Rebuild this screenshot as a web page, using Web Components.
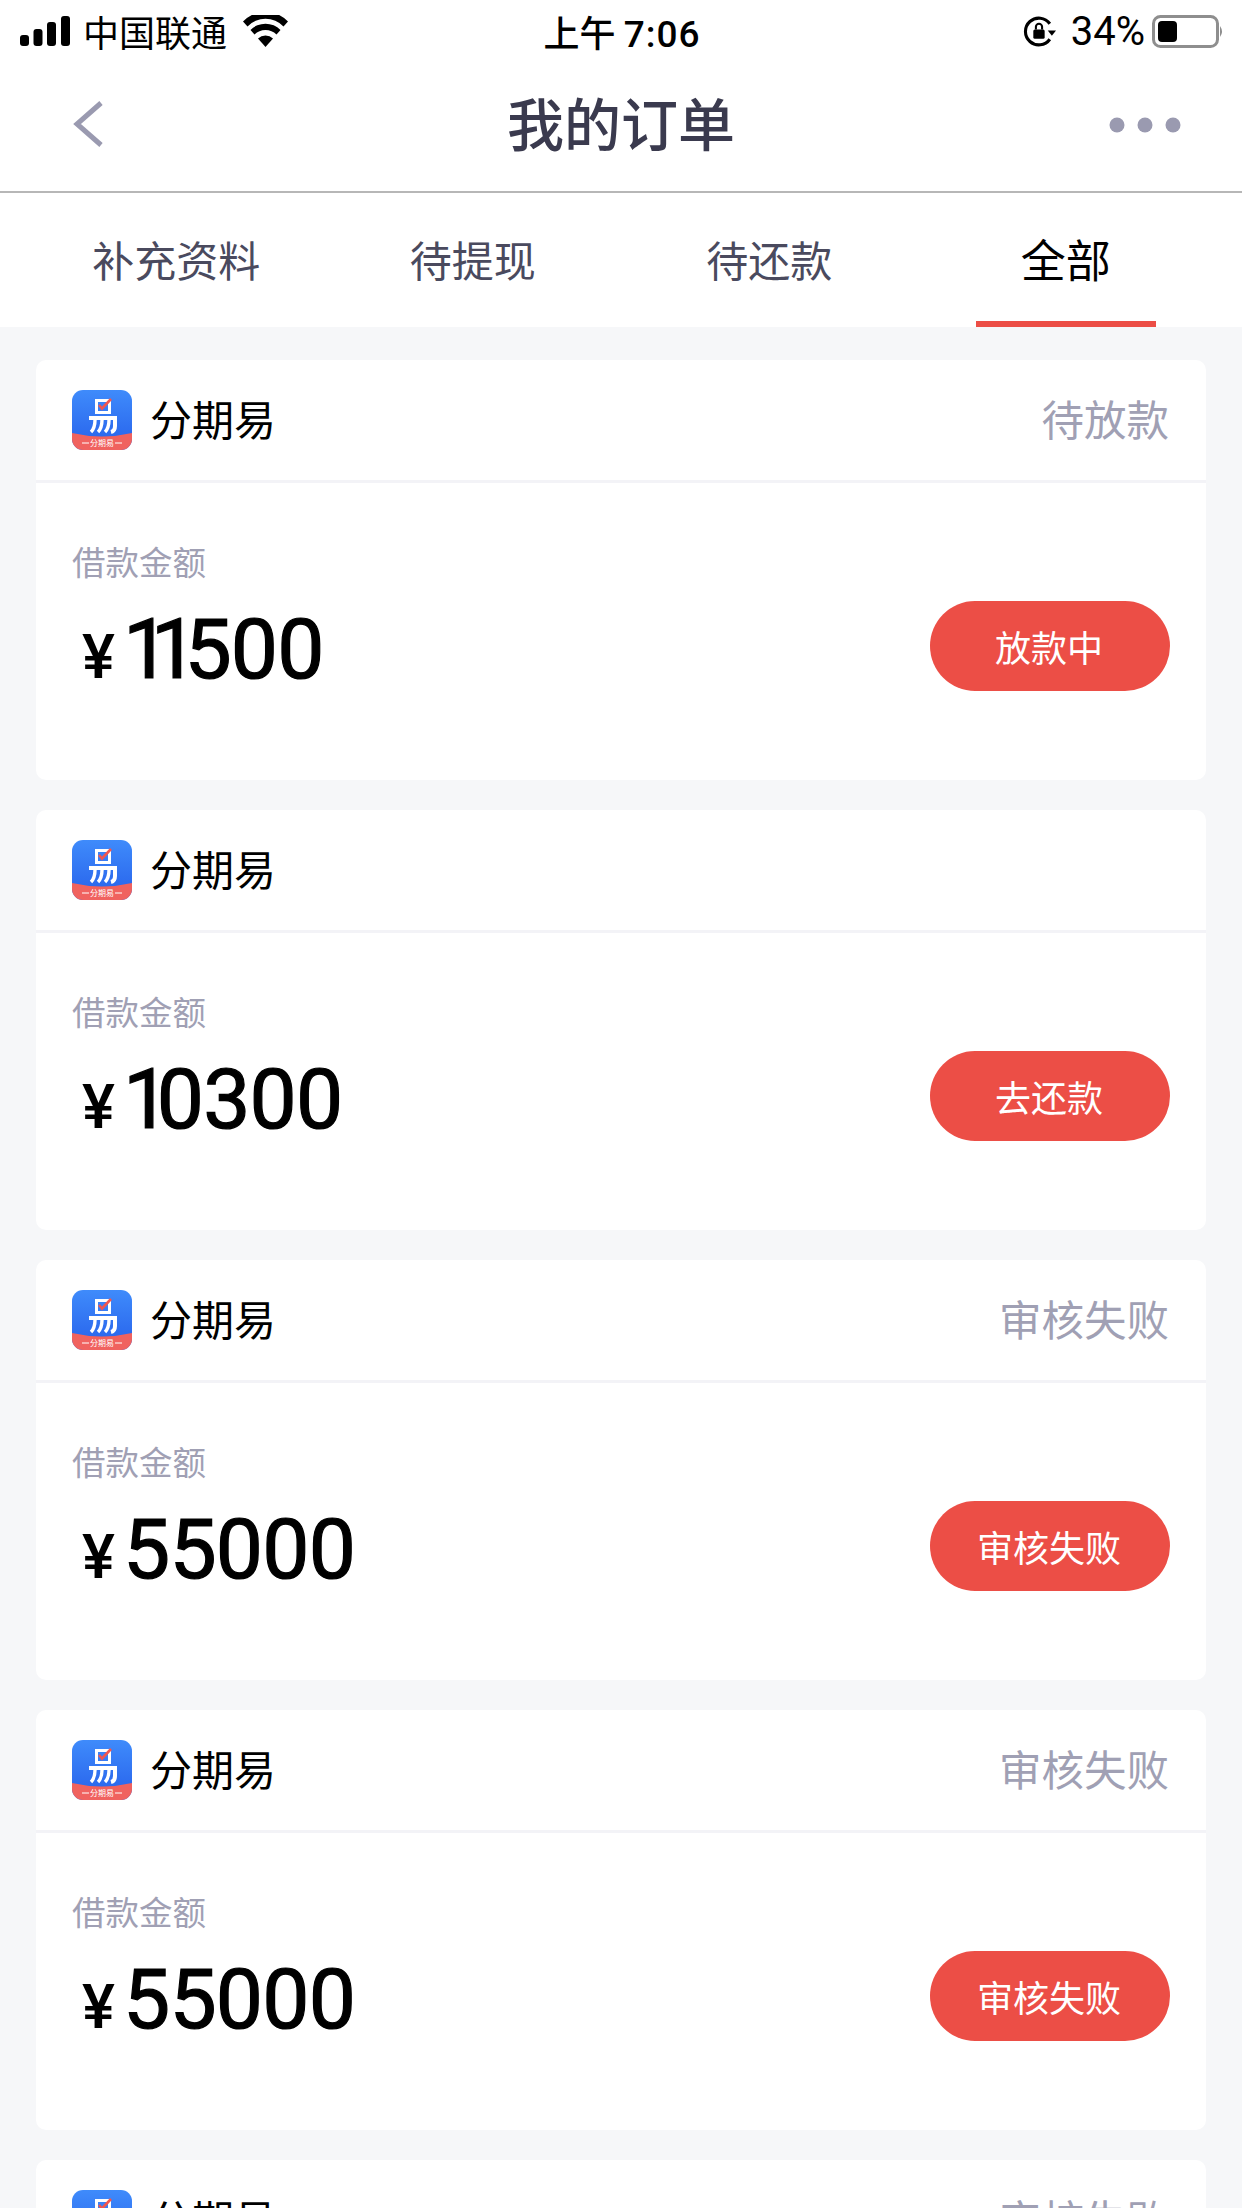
<!DOCTYPE html>
<html lang="zh-CN">
<head>
<meta charset="utf-8">
<title>我的订单</title>
<style>
    html, body {
        margin: 0;
        height: 2208px;
        overflow: hidden;
        background: #f6f7f9;
        font-family: "Noto Sans CJK SC", "Liberation Sans", sans-serif;
    }
    .list {
        display: flex;
        flex-direction: column;
        gap: 30px;
        padding: 33px 36px 0;
    }
</style>
</head>
<body>
<status-bar></status-bar>
<nav-bar>我的订单</nav-bar>
<tab-bar tabs="补充资料,待提现,待还款,全部" active="3"></tab-bar>
<div class="list">
    <order-card status="待放款" amount="11500" action="放款中">分期易</order-card>
    <order-card status="" amount="10300" action="去还款">分期易</order-card>
    <order-card status="审核失败" amount="55000" action="审核失败">分期易</order-card>
    <order-card status="审核失败" amount="55000" action="审核失败">分期易</order-card>
    <order-card status="审核失败" amount="55000" action="审核失败">分期易</order-card>
</div>
<script>
class StatusBar extends HTMLElement {
    constructor() {
        super();
        this.attachShadow({ mode: 'open' });
    }

    connectedCallback() {
        this.shadowRoot.innerHTML = `
        <style>
            :host {
                display: grid;
                grid-template-columns: 1fr auto 1fr;
                align-items: center;
                box-sizing: border-box;
                height: 62px;
                padding: 0 18px 2px 20px;
                background: #fff;
                color: #000;
                font-size: 36px;
                font-family: "Noto Sans CJK SC", sans-serif;
            }
            .left, .right { display: flex; align-items: center; }
            .right { justify-content: flex-end; }
            .carrier { margin: 0 15px 0 13px; line-height: 60px; }
            .time { font-weight: 500; font-size: 36px; line-height: 60px; }
            .time b { font: 500 37px Roboto, sans-serif; letter-spacing: 1px; }
            .pct { font: 400 40px/60px Roboto, sans-serif; margin: 2px 7px 0 15px; }
            svg { display: block; }
        </style>
        <div class="left">
            <svg width="50" height="30" viewBox="0 0 50 30">
                <rect x="0" y="19" width="9" height="11" rx="3"/>
                <rect x="13.5" y="13" width="9" height="17" rx="3"/>
                <rect x="27" y="6" width="9" height="24" rx="3"/>
                <rect x="41" y="0" width="9" height="30" rx="3"/>
            </svg>
            <span class="carrier">中国联通</span>
            <svg width="47" height="32" viewBox="0 0 47 32">
                <path d="M23.5 32 L16 23.5 A11 11 0 0 1 31 23.5 Z"/>
                <path d="M12.5 19.5 L8.5 15 A21 21 0 0 1 38.5 15 L34.5 19.5 A15.5 15.5 0 0 0 12.5 19.5 Z"/>
                <path d="M5.5 11.5 L1 6.5 A31 31 0 0 1 46 6.5 L41.5 11.5 A25 25 0 0 0 5.5 11.5 Z"/>
            </svg>
        </div>
        <div class="time">上午 <b>7:06</b></div>
        <div class="right">
            <svg width="33" height="33" viewBox="0 0 32 32">
                <path d="M26 8.5 A13 13 0 1 0 26 23.5" fill="none" stroke="#000" stroke-width="3"/>
                <path d="M24 15 L32 15 L28 20 Z"/>
                <rect x="10" y="14" width="11" height="9" rx="1.5"/>
                <path d="M12.5 14 V11.5 A3 3 0 0 1 18.5 11.5 V14" fill="none" stroke="#000" stroke-width="2"/>
            </svg>
            <span class="pct">34%</span>
            <svg width="72" height="33" viewBox="0 0 72 33">
                <rect x="1.5" y="1.5" width="64" height="30" rx="7" fill="none" stroke="#8e8e8e" stroke-width="3"/>
                <rect x="6" y="6" width="19" height="21" rx="4"/>
                <path d="M68 11 Q72 16.5 68 22 Z" fill="#8e8e8e"/>
            </svg>
        </div>
        `;
    }
}

class NavBar extends HTMLElement {
    constructor() {
        super();
        this.attachShadow({ mode: 'open' });
    }

    connectedCallback() {
        this.shadowRoot.innerHTML = `
        <style>
            :host {
                display: grid;
                grid-template-columns: 1fr auto 1fr;
                align-items: center;
                box-sizing: border-box;
                height: 131px;
                padding: 0 61px 6px;
                background: #fff;
                border-bottom: 2px solid #b7b7b7;
            }
            .title {
                margin-bottom: 6px;
                font-size: 57px;
                font-weight: 500;
                color: #3a3a4e;
            }
            svg { display: block; }
            .back { margin-left: 11px; }
            .dots { justify-self: end; margin-top: 2px; }
        </style>
        <svg class="back" width="32" height="46" viewBox="0 0 32 46">
            <path d="M29 2 L5 23 L29 44" fill="none" stroke="#9a9ab0" stroke-width="5"/>
        </svg>
        <div class="title"><slot></slot></div>
        <svg class="dots" width="72" height="16" viewBox="0 0 72 16" fill="#9a9ab0">
            <circle cx="8" cy="8" r="7.5"/><circle cx="36" cy="8" r="7.5"/><circle cx="64" cy="8" r="7.5"/>
        </svg>
        `;
    }
}

class TabBar extends HTMLElement {
    constructor() {
        super();
        this.attachShadow({ mode: 'open' });
    }

    connectedCallback() {
        const tabs = (this.getAttribute('tabs') || '').split(',');
        const active = Number(this.getAttribute('active'));
        this.shadowRoot.innerHTML = `
        <style>
            :host {
                display: flex;
                height: 134px;
                padding: 0 28px;
                background: #fff;
            }
            .tab {
                position: relative;
                flex: 1;
                display: flex;
                align-items: center;
                justify-content: center;
                padding-bottom: 4px;
                font-size: 42px;
                color: #4a4a5e;
            }
            .tab.on { color: #000; font-size: 45px; }
            .tab.on::after {
                content: '';
                position: absolute;
                left: 58px;
                right: 58px;
                bottom: 0;
                height: 6px;
                background: #ec4e46;
            }
        </style>
        ${tabs.map((t, i) => `<div class="tab${i === active ? ' on' : ''}">${t}</div>`).join('')}
        `;
    }
}

class AppLogo extends HTMLElement {
    constructor() {
        super();
        this.attachShadow({ mode: 'open' });
    }

    connectedCallback() {
        this.shadowRoot.innerHTML = `
        <style>
            :host { display: block; width: 60px; height: 60px; }
            svg { display: block; }
            text { font-family: "Noto Sans CJK SC", sans-serif; }
        </style>
        <svg width="60" height="60" viewBox="0 0 60 60">
            <defs>
                <linearGradient id="g" x1="0" y1="0" x2="0" y2="1">
                    <stop offset="0" stop-color="#3f8bfb"/>
                    <stop offset="1" stop-color="#2660ea"/>
                </linearGradient>
                <clipPath id="c"><rect width="60" height="60" rx="11"/></clipPath>
            </defs>
            <g clip-path="url(#c)">
                <rect width="60" height="60" fill="url(#g)"/>
                <path d="M0 43 Q30 50 60 43 V60 H0 Z" fill="#f0625f"/>
            </g>
            <rect x="24.5" y="10.5" width="13" height="12" fill="none" stroke="#fff" stroke-width="3"/>
            <path d="M27 15 L30 18.5 L39 9" fill="none" stroke="#f0564f" stroke-width="2.6"/>
            <path d="M17 28 H43 V36 Q43 41 39 42" fill="none" stroke="#fff" stroke-width="4"/>
            <path d="M23 30 Q23 38 19 42 M30 30 Q30 38 26 42 M37 30 Q37 38 33 42" fill="none" stroke="#fff" stroke-width="3.4"/>
            <path d="M10 53 H17 M43 53 H50" stroke="#fff" stroke-width="1"/>
            <text x="30" y="56" font-size="8" fill="#fff" text-anchor="middle">分期易</text>
        </svg>
        `;
    }
}

class OrderCard extends HTMLElement {
    constructor() {
        super();
        this.attachShadow({ mode: 'open' });
    }

    connectedCallback() {
        const status = this.getAttribute('status') || '';
        const amount = this.getAttribute('amount') || '0';
        const action = this.getAttribute('action') || '';
        // the reference digits have a narrow 1, Roboto's is tabular
        const digits = [...amount].map((d, i) => {
            if (d !== '1') return d;
            return `<span class="one${amount[i + 1] === '1' ? ' pair' : ''}">1</span>`;
        }).join('');
        this.shadowRoot.innerHTML = `
        <style>
            :host {
                display: block;
                height: 420px;
                background: #fff;
                border-radius: 10px;
                overflow: hidden;
            }
            .head {
                display: flex;
                align-items: center;
                box-sizing: border-box;
                height: 123px;
                padding: 0 37px 0 36px;
                border-bottom: 3px solid #f3f3f7;
            }
            .brand { flex: 1; margin: 0 0 6px 18px; font-size: 42px; color: #000; }
            .status { margin-bottom: 6px; font-size: 42.5px; color: #a0a0b4; }
            .body {
                display: flex;
                align-items: flex-start;
                justify-content: space-between;
                padding: 54px 36px 0 36px;
            }
            .label { font-size: 33.5px; line-height: 48px; color: #a0a0b4; }
            .amount {
                display: flex;
                align-items: baseline;
                margin-top: 17px;
                padding-left: 10px;
                color: #000;
            }
            .yen { font: 500 62px Roboto, sans-serif; width: 41px; }
            .num {
                font: 400 84px/96px Roboto, sans-serif;
                letter-spacing: -0.8px;
                -webkit-text-stroke: 1.2px #000;
            }
            .one { letter-spacing: -13.5px; }
            .one.pair { letter-spacing: -19.5px; }
            .btn {
                display: flex;
                align-items: center;
                justify-content: center;
                box-sizing: border-box;
                width: 240px;
                height: 90px;
                margin-top: 64px;
                padding-right: 2px;
                border-radius: 45px;
                background: #ec4e46;
                color: #fff;
                font-size: 36px;
            }
        </style>
        <div class="head">
            <app-logo></app-logo>
            <div class="brand"><slot></slot></div>
            <div class="status">${status}</div>
        </div>
        <div class="body">
            <div>
                <div class="label">借款金额</div>
                <div class="amount"><span class="yen">¥</span><span class="num">${digits}</span></div>
            </div>
            <div class="btn">${action}</div>
        </div>
        `;
    }
}

customElements.define('status-bar', StatusBar);
customElements.define('nav-bar', NavBar);
customElements.define('tab-bar', TabBar);
customElements.define('app-logo', AppLogo);
customElements.define('order-card', OrderCard);
</script>
</body>
</html>
